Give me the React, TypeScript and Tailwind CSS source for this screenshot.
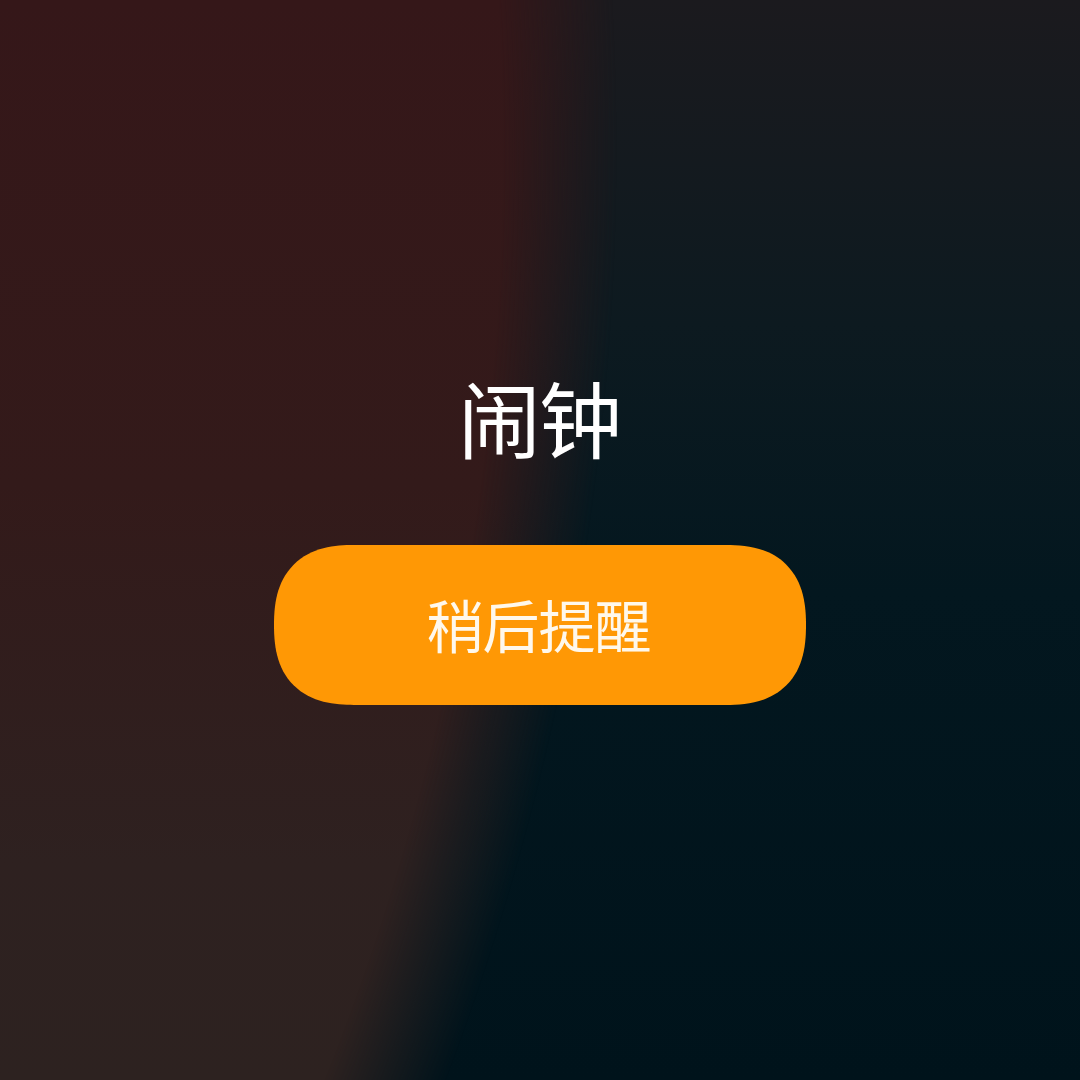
import React from 'react';

const App = () => {
  return (
    <div className="relative w-[1080px] h-[1080px] overflow-hidden bg-[linear-gradient(180deg,#1b1a1e_0%,#0d1a20_30%,#03171f_55%,#00131b_100%)] font-['Noto_Sans_CJK_SC','Noto_Sans',sans-serif]">
      {/* warm left backdrop */}
      <div className="absolute inset-0 bg-[linear-gradient(180deg,#351719_0%,#331a1a_45%,#2e2120_80%,#2d2220_100%)] [mask-image:radial-gradient(circle_2567px_at_-2003px_150px,#000_2505px,transparent_2620px)]" />

      <div className="relative flex flex-col items-center pt-[364px]">
        <h1 className="text-[83px] leading-[104px] text-white font-normal tracking-[-2px] pr-[2px]">闹钟</h1>
        <button className="mt-[77px] w-[532px] h-[160px] rounded-full [corner-shape:superellipse(1.3)] bg-[#ff9805] flex items-center justify-center">
          <span className="text-[57px] leading-none text-[#fff8ec] tracking-[-1px] pb-[4px] pr-[3px]">稍后提醒</span>
        </button>
      </div>
    </div>
  );
};

export default App;
